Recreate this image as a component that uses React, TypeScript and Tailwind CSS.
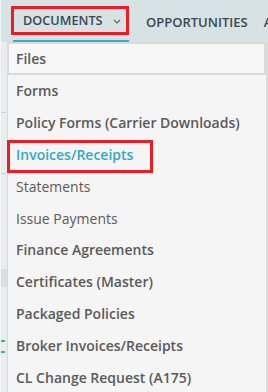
const items = [
  { label: "Files", weight: "font-semibold", boxed: true },
  { label: "Forms", weight: "font-semibold" },
  { label: "Policy Forms (Carrier Downloads)", weight: "font-semibold" },
  { label: "Invoices/Receipts", weight: "font-semibold", active: true },
  { label: "Statements", weight: "font-normal" },
  { label: "Issue Payments", weight: "font-normal" },
  { label: "Finance Agreements", weight: "font-semibold" },
  { label: "Certificates (Master)", weight: "font-semibold" },
  { label: "Packaged Policies", weight: "font-semibold" },
  { label: "Broker Invoices/Receipts", weight: "font-semibold" },
  { label: "CL Change Request (A175)", weight: "font-semibold" },
];

const App = () => {
  return (
    <div
      className="w-[268px] h-[392px] overflow-hidden bg-[#eceff0] flex flex-col"
      style={{ fontFamily: '"Open Sans", "Liberation Sans", sans-serif' }}
    >
      {/* top nav */}
      <div className="h-[42px] shrink-0 bg-[#d6e2e3] flex items-start border-l border-[#eef3f3]">
        <div className="ml-[10px] mt-[6px] flex flex-col">
          <div className="w-[118px] h-[29px] border-[3px] border-[#ee1c25] flex items-center pl-[9px] gap-[10px]">
            <span className="text-[12.7px] font-semibold text-[#3b4750]">DOCUMENTS</span>
            <svg width="8" height="5" viewBox="0 0 8 5" className="mt-[1px]">
              <path d="M1 1 L4 4 L7 1" fill="none" stroke="#5b6670" strokeWidth="1.2" />
            </svg>
          </div>
          <div className="mt-[5px] ml-[2px] h-[2px] w-[116px] bg-[#2fb0c4]" />
        </div>
        <span className="ml-[17px] mt-[13px] text-[13px] font-semibold text-[#3b4750] whitespace-nowrap">
          OPPORTUNITIES
        </span>
        <span className="ml-[16px] mt-[13px] text-[13px] font-semibold text-[#3b4750]">A</span>
      </div>

      <div className="flex flex-1 min-h-0">
        {/* page behind the menu */}
        <div className="w-[7px] shrink-0 bg-[#e9eded] border-l border-[#f4f6f6] flex flex-col">
          <div className="h-[70px]" />
          <div className="h-px w-[5px] bg-[#c9d0d0]" />
          <div className="h-[60px]" />
          <div className="h-px w-[5px] bg-[#c9d0d0]" />
          <div className="h-[95px]" />
          <div className="h-[18px] w-[6px] bg-[#dcdfe0]" />
          <div className="h-[53px]" />
          <div className="h-[2px] w-[4px] bg-[#3cb49a]" />
          <div className="h-[9px]" />
          <div className="h-[2px] w-[4px] bg-[#3cb49a]" />
        </div>

        {/* dropdown */}
        <div className="flex-1 bg-[#f5f5f5] border-l border-[#d9d9d9] border-r-2 border-r-[#dcdcdc] flex flex-col">
          {items.map((item) => (
            <div
              key={item.label}
              className={
                item.boxed
                  ? "relative h-[33px] shrink-0 flex items-center pl-[7px] border-2 border-[#dadada] bg-[#f7f7f7] -ml-px"
                  : "relative h-[31.8px] shrink-0 flex items-center pl-[8px]"
              }
            >
              <span
                className={`text-[14px] whitespace-nowrap ${item.weight} ${
                  item.active ? "text-[#33a9c1]" : "text-[#5a5a5a]"
                }`}
              >
                {item.label}
              </span>
              {item.active && (
                <div className="absolute left-[-1px] top-[1px] w-[146px] h-[33px] border-[3px] border-[#ee1c25]" />
              )}
            </div>
          ))}
        </div>
      </div>
    </div>
  );
};

export default App;
